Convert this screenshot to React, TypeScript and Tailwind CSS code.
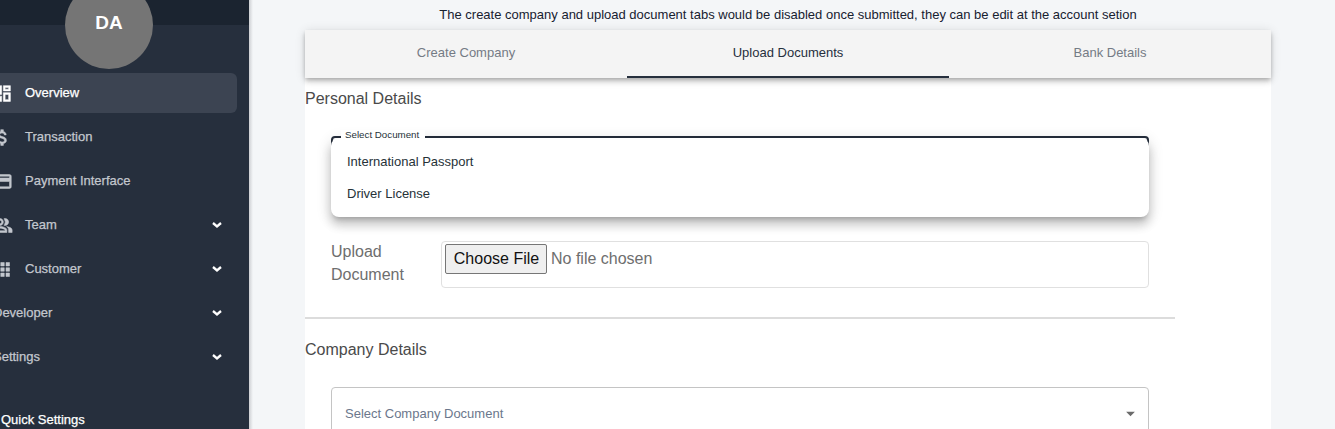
import type { ReactNode } from 'react';
import {
  MdApps,
  MdArrowDropDown,
  MdAttachMoney,
  MdCreditCard,
  MdOutlineDashboard,
  MdOutlinePeopleAlt,
} from 'react-icons/md';

function Chevron() {
  return (
    <svg viewBox="0 0 10 6" className="mr-[15px] h-[6px] w-[10px]" fill="none" stroke="#fff" strokeWidth="2.3">
      <path d="M1 1l4 3.4L9 1" />
    </svg>
  );
}

type ItemProps = { label: string; icon?: ReactNode; active?: boolean; expandable?: boolean };

function NavItem({ label, icon, active, expandable }: ItemProps) {
  return (
    <li
      className={
        active
          ? 'flex h-10 items-center rounded-r-md bg-[#3c4452] text-white'
          : 'flex h-10 items-center text-[#c3c7ce]'
      }
    >
      {icon && (
        <span className="-ml-[8.5px] mr-[12.5px] shrink-0 text-[21px] [&_path:not([fill=none])]:stroke-current [&_path:not([fill=none])]:[stroke-width:0.6px]">
          {icon}
        </span>
      )}
      <span className={icon ? 'grow' : '-ml-[7px] grow'}>{label}</span>
      {expandable && <Chevron />}
    </li>
  );
}

function Sidebar() {
  return (
    <aside className="relative z-10 h-full w-[249px] shrink-0 overflow-hidden bg-[#262f3d] text-[13px] [-webkit-text-stroke:0.25px]">
      <div className="h-[25px] bg-[#1b2430]" />
      <div className="relative -mt-[44px] ml-[65px] flex h-[88px] w-[88px] items-center justify-center rounded-full bg-[#757575] pb-[3px] text-[19px] font-bold text-white [-webkit-text-stroke:0]">
        DA
      </div>
      <ul className="mt-1 mr-3 flex flex-col gap-1">
        <NavItem label="Overview" icon={<MdOutlineDashboard />} active />
        <NavItem label="Transaction" icon={<MdAttachMoney />} />
        <NavItem label="Payment Interface" icon={<MdCreditCard />} />
        <NavItem label="Team" icon={<MdOutlinePeopleAlt />} expandable />
        <NavItem label="Customer" icon={<MdApps />} expandable />
        <NavItem label="Developer" expandable />
        <NavItem label="Settings" expandable />
      </ul>
      <p className="mt-[33px] ml-px leading-5 text-white">Quick Settings</p>
    </aside>
  );
}

function Tabs() {
  return (
    <div className="relative grid h-12 grid-cols-3 bg-[#f4f4f4] text-center leading-[46px] shadow-[0_2px_4px_-1px_rgba(0,0,0,0.2),0_4px_5px_0_rgba(0,0,0,0.14),0_1px_10px_0_rgba(0,0,0,0.12)]">
      <div className="text-[#747b85]">Create Company</div>
      <div className="border-b-2 border-[#262f3d] text-[#262f3d]">Upload Documents</div>
      <div className="text-[#747b85]">Bank Details</div>
    </div>
  );
}

function DocumentSelect() {
  return (
    <div className="relative mt-[25px] ml-[26px] h-[53px] w-[818px] rounded-[4px] border-2 border-[#262f3d]">
      <ul className="absolute -inset-x-[2px] top-0 h-[79px] rounded-[8px] bg-white pt-[8px] pl-4 leading-8 text-[#263238] shadow-[0_5px_5px_-3px_rgba(0,0,0,0.2),0_8px_10px_1px_rgba(0,0,0,0.14),0_3px_14px_2px_rgba(0,0,0,0.12)]">
        <li>International Passport</li>
        <li>Driver License</li>
      </ul>
      <span className="absolute -top-[8px] left-[8px] bg-white pr-[6px] pl-[4px] text-[9.75px] leading-[10px] text-[#263238]">
        Select Document
      </span>
    </div>
  );
}

function FileRow() {
  return (
    <div className="mt-[52px] ml-[26px] flex w-[818px] text-base text-[#6e6e6e]">
      <label className="-mt-px w-[110px] leading-[23px]">
        Upload
        <br />
        Document
      </label>
      <div className="flex h-[47px] grow items-start gap-1 rounded-[4px] border border-[#e0e0e0] px-[3px] pt-[2px]">
        <button className="h-[30px] w-[102px] rounded-[2px] border border-[#767676] bg-[#efefef] pl-px leading-7 whitespace-nowrap text-[#111]">
          Choose File
        </button>
        <span className="leading-[30px]">No file chosen</span>
      </div>
    </div>
  );
}

export default function App() {
  return (
    <div className="flex h-[429px] w-[1335px] overflow-hidden bg-[#f4f6f8] font-['Liberation_Sans',Arial,sans-serif] text-[13px]">
      <Sidebar />
      <div className="w-1 shrink-0 bg-gradient-to-r from-[#cdcfd3] to-[#f4f6f8]" />
      <main className="ml-[52px] w-[966px] shrink-0">
        <p className="h-[30px] text-center leading-[29px] whitespace-nowrap text-[#172130]">
          The create company and upload document tabs would be disabled once submitted, they can be edit at the account
          setion
        </p>
        <Tabs />
        <div className="h-[400px] bg-white">
          <h2 className="pt-[9px] text-base leading-6 text-[#4a4a4a]">Personal Details</h2>
          <DocumentSelect />
          <FileRow />
          <hr className="mt-[29px] w-[870px] border-t-2 border-[#dcdcdc]" />
          <h2 className="mt-[19px] text-base leading-6 text-[#4a4a4a]">Company Details</h2>
          <div className="mt-[25px] ml-[26px] flex h-[53px] w-[818px] items-center justify-between rounded-[4px] border border-[#c4c4c4] pr-[7px] pl-[13px] text-[#6b778c]">
            <span>Select Company Document</span>
            <MdArrowDropDown className="text-[21px] text-[#6b6b6b]" />
          </div>
        </div>
      </main>
    </div>
  );
}
